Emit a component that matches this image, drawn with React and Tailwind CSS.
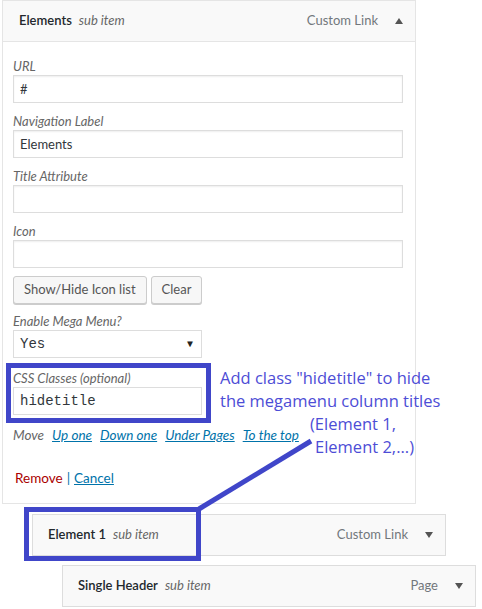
import React from 'react'

const font = { fontFamily: 'Lato, "Open Sans", sans-serif' }

function Arrow({ up }) {
  return (
    <svg width="8" height="6" viewBox="0 0 8 6" className="text-[#555]">
      {up ? <path d="M0 6 L4 0 L8 6 Z" fill="currentColor" /> : <path d="M0 0 L8 0 L4 6 Z" fill="currentColor" />}
    </svg>
  )
}

function Field({ label, value, className = '' }) {
  return (
    <div className={className}>
      <div className="text-[13px] italic leading-[18px] text-[#666]">{label}</div>
      <div className="h-[28px] w-[390px] border border-[#ddd] bg-white px-[6px] text-[13px] leading-[26px] text-[#32373c] shadow-[inset_0_1px_2px_rgba(0,0,0,0.07)]">
        {value}
      </div>
    </div>
  )
}

function Item({ title, type, className }) {
  return (
    <div className={`flex h-[42px] items-center border border-[#ddd] bg-[#f9f9f9] pl-[15px] pr-[12px] ${className}`}>
      <span className="text-[13px] font-semibold text-[#23282d]">{title}</span>
      <span className="ml-[7px] text-[13px] italic text-[#666]">sub item</span>
      <span className="ml-auto text-[13px] text-[#72777c]">{type}</span>
      <span className="ml-[17px] flex items-center"><Arrow /></span>
    </div>
  )
}

export default function App() {
  return (
    <div className="relative h-[609px] w-[482px] overflow-hidden bg-white" style={font}>
      <div className="ml-[2px] w-[414px] border border-[#e5e5e5] bg-white">
        <div className="flex h-[41px] items-center border-b border-[#e5e5e5] bg-[#f9f9f9] pl-[16px] pr-[12px]">
          <span className="text-[13px] font-semibold text-[#23282d]">Elements</span>
          <span className="ml-[7px] text-[13px] italic text-[#666]">sub item</span>
          <span className="ml-auto text-[13px] text-[#72777c]">Custom Link</span>
          <span className="ml-[17px] flex items-center"><Arrow up /></span>
        </div>
        <div className="px-[10px] pb-[15px] pt-[15px]">
          <Field label="URL" value="#" />
          <Field label="Navigation Label" value="Elements" className="mt-[9px]" />
          <Field label="Title Attribute" value="" className="mt-[9px]" />
          <Field label="Icon" value="" className="mt-[9px]" />
          <div className="mt-[8px] flex gap-[4px]">
            <button className="h-[28px] rounded-[3px] border border-[#ccc] bg-[#f7f7f7] px-[10px] text-[13px] text-[#555] shadow-[0_1px_0_#ccc]">Show/Hide Icon list</button>
            <button className="h-[28px] rounded-[3px] border border-[#ccc] bg-[#f7f7f7] px-[10px] text-[13px] text-[#555] shadow-[0_1px_0_#ccc]">Clear</button>
          </div>
          <div className="mt-[8px] text-[13px] italic leading-[18px] text-[#666]">Enable Mega Menu?</div>
          <div className="flex h-[28px] w-[189px] items-center border border-[#ddd] bg-white pl-[6px] pr-[8px] text-[14px] text-[#32373c]" style={{ fontFamily: '"Liberation Mono", monospace' }}>
            <span>Yes</span>
            <span className="ml-auto text-[10px] text-[#222]">▼</span>
          </div>
          <div className="mt-[11px] text-[13px] italic leading-[18px] text-[#666]">CSS Classes (optional)</div>
          <div className="h-[28px] w-[189px] border border-[#ddd] bg-white px-[6px] text-[14px] leading-[26px] text-[#32373c]" style={{ fontFamily: '"Liberation Mono", monospace' }}>hidetitle</div>
          <div className="mt-[10px] flex h-[20px] items-center gap-[8px] text-[13.5px] italic text-[#666]">
            <span>Move</span>
            <span className="text-[#0073aa] underline">Up one</span>
            <span className="text-[#0073aa] underline">Down one</span>
            <span className="text-[#0073aa] underline">Under Pages</span>
            <span className="text-[#0073aa] underline">To the top</span>
          </div>
          <div className="mt-[23px] flex h-[20px] items-center pl-[2px] text-[13.5px]">
            <span className="text-[#a00]">Remove</span>
            <span className="mx-[4px] text-[#0073aa]">|</span>
            <span className="text-[#0073aa] underline">Cancel</span>
          </div>
        </div>
      </div>

      <Item title="Element 1" type="Custom Link" className="ml-[32px] mt-[10px] w-[414px]" />
      <Item title="Single Header" type="Page" className="ml-[62px] mt-[9px] w-[414px]" />

      {/* annotation overlay */}
      <div className="absolute left-[6px] top-[363px] h-[60px] w-[205px] border-[5px] border-[#4046c9]" />
      <div className="absolute left-[24px] top-[507px] h-[54px] w-[177px] border-[5px] border-[#4046c9]" />
      <svg className="absolute left-0 top-0" width="482" height="609">
        <line x1="311" y1="441" x2="199" y2="509" stroke="#4046c9" strokeWidth="5" />
      </svg>
      <div className="absolute left-[220px] top-[366px] text-[16.5px] leading-[23px] text-[#4d4dd6]" style={{ fontFamily: '"Open Sans", sans-serif' }}>
        <div>Add class "hidetitle" to hide</div>
        <div>the megamenu column titles</div>
        <div className="pl-[90px]">(Element 1,</div>
        <div className="pl-[95px]">Element 2,...)</div>
      </div>
    </div>
  )
}
